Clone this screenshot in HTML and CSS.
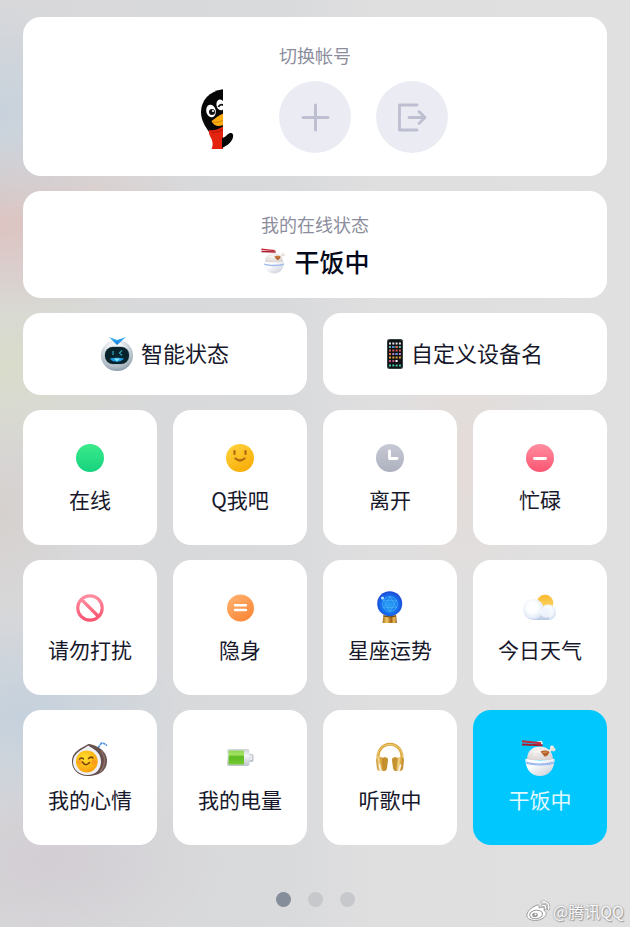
FILE: index.html
```html
<!DOCTYPE html>
<html lang="zh-CN">

<head>
    <meta charset="UTF-8">
    <meta name="viewport" content="width=device-width, initial-scale=1.0">
    <title>我的在线状态</title>
    <link rel="stylesheet" href="styles.css">
</head>

<body>
    <!-- rice bowl is used twice, so it lives here as a symbol -->
    <svg class="defs" width="0" height="0" aria-hidden="true">
        <defs>
            <linearGradient id="bowlFill" x1="0" y1="0" x2="1" y2="1">
                <stop offset="0.3" stop-color="#ffffff" />
                <stop offset="1" stop-color="#c3c8d2" />
            </linearGradient>
            <radialGradient id="riceFill" cx="0.4" cy="0.3" r="0.8">
                <stop offset="0" stop-color="#fbf9f7" />
                <stop offset="1" stop-color="#d5d0cf" />
            </radialGradient>
        </defs>
        <symbol id="rice" viewBox="0 0 40 40">
            <path d="M7 22C7 13 12 8.500 20 8.500S33 14 33 22z" fill="url(#riceFill)" />
            <path d="M11 16h2M15 12h2M20 11h2M17 16h2M12 19h3M22 20h3M28 20h2M18 20h1" stroke="#e4dfdd" stroke-linecap="round" />
            <path d="M27 15l5-4" stroke="#eee8e2" stroke-width="2.500" stroke-linecap="round" />
            <circle cx="32" cy="9.500" r="2" fill="#f4efea" />
            <circle cx="33.500" cy="11.500" r="2" fill="#e6e0da" />
            <path d="M20.500 13.500c3-1.500 7-1.500 9 .5-1 3-3 5-5 4.500-1-1.500-2-2-4-5z" fill="#b5622c" />
            <path d="M23 14.500l4-.5" stroke="#e09a5e" stroke-linecap="round" />
            <path d="M5.500 20.500c4 2.500 25 2.500 29 0C35 30 29.500 38 20 38S5 30 5.500 20.500z" fill="url(#bowlFill)" />
            <path d="M6 24.500c6 2.500 22 2.500 28 0" fill="none" stroke="#8fb0ec" stroke-width="2" />
            <path d="M6 24.500c6 2.500 22 2.500 28 0" fill="none" stroke="#c4d5f7" stroke-width="1" stroke-dasharray="1 1" />
            <path d="M17 3.500l5-.8 1 3.500-5 .5z" fill="#eceef2" />
            <path d="M2 3.200l19 2" stroke="#c8283a" stroke-width="2" />
            <path d="M2 6.500l20.500.7" stroke="#a81f33" stroke-width="2" />
        </symbol>
    </svg>

    <main class="panel">
        <section class="card account">
            <h2 class="card-title">切换帐号</h2>
            <div class="account-list">
                <button type="button" class="round avatar" aria-label="QQ">
                    <svg viewBox="0 0 72 72" width="72" height="72">
                        <clipPath id="half"><path d="M0 0H41V72H0z" /></clipPath>
                        <g clip-path="url(#half)">
                            <path d="M43 8C28 9 19 19 19 31c0 8 4 14 8 20l18 2V8z" fill="#070707" />
                            <ellipse cx="29" cy="30" rx="4.800" ry="6.300" fill="#fff" transform="rotate(-12 29 30)" />
                            <circle cx="30" cy="31" r="3" fill="#111" />
                            <circle cx="31" cy="30" r="1.100" fill="#fff" />
                            <ellipse cx="38.500" cy="24" rx="4" ry="5.500" fill="#fff" transform="rotate(-12 38 24)" />
                            <path d="M36.500 26c1-3 4-3 6-1" fill="none" stroke="#111" stroke-width="1.800" />
                            <path d="M29.500 40C33 38 36 34 43 32v11c-5 3-11 3-13.500-3z" fill="#fbab0c" />
                            <path d="M31 41c3 1 7 0 11-2" fill="none" stroke="#d98300" />
                            <path d="M27 49c5 1 10-1 15-4v23H29.500c2-5 1-7 0-10-1-3-3-4-2.500-9z" fill="#e3220f" />
                            <path d="M30 51c4 1 8-1 12-3" fill="none" stroke="#b51708" />
                        </g>
                        <path d="M40 57c3 0 5-4 8-5 3-.5 4 2 2.500 6C48 63 44 65 40 67z" fill="#070707" />
                    </svg>
                </button>
                <button type="button" class="round" aria-label="添加帐号">
                    <svg viewBox="0 0 72 72" width="72" height="72" fill="none" stroke="#bdbfd1" stroke-width="3" stroke-linecap="round">
                        <path d="M36.500 24v25M24 36.500h25" />
                    </svg>
                </button>
                <button type="button" class="round" aria-label="退出登录">
                    <svg viewBox="0 0 72 72" width="72" height="72" fill="none" stroke="#bdbfd1" stroke-width="2.800" stroke-linecap="round" stroke-linejoin="round">
                        <path d="M41 24H23.500v25H41M33 36.500h16M43 30.500l6 6-6 6" />
                    </svg>
                </button>
            </div>
        </section>

        <section class="card current">
            <h2 class="card-title">我的在线状态</h2>
            <p class="current-status">
                <svg width="28" height="28" aria-hidden="true"><use href="#rice" /></svg>
                <span>干饭中</span>
            </p>
        </section>

        <div class="wide-row">
            <button type="button" class="card wide">
                <svg viewBox="0 0 32 36" width="32" height="36" aria-hidden="true">
                    <defs>
                        <radialGradient id="botHead" cx="0.450" cy="0.300" r="0.750">
                            <stop offset="0.300" stop-color="#f0f3f5" />
                            <stop offset="0.800" stop-color="#a9b5c0" />
                            <stop offset="1" stop-color="#7e8e9d" />
                        </radialGradient>
                        <linearGradient id="botEar" x1="0" y1="0" x2="0" y2="1">
                            <stop offset="0" stop-color="#35b9f7" />
                            <stop offset="1" stop-color="#1477dd" />
                        </linearGradient>
                    </defs>
                    <ellipse cx="16" cy="19.500" rx="16" ry="15.500" fill="url(#botHead)" />
                    <path d="M8 1l8 3 9-3-9 8z" fill="url(#botEar)" />
                    <rect x="3.500" y="10.500" width="25" height="18" rx="8.500" fill="#8ea5b0" />
                    <rect x="4" y="11" width="24" height="17" rx="8" fill="#08232b" />
                    <path d="M12 15v4M21 14.500l-2.500 2.500 2.500 2.500" fill="none" stroke="#2b9fb3" stroke-width="1.300" />
                    <path d="M9 22.500c4-1 10-1 14 0-2 4-12 4.500-14 0z" fill="#1e9fe4" />
                    <path d="M13 22.500l6 0-3 3z" fill="#8de6ff" />
                </svg>
                <span>智能状态</span>
            </button>
            <button type="button" class="card wide">
                <svg viewBox="0 -3 16 36" width="16" height="36" aria-hidden="true">
                    <rect width="16" height="30" rx="2.500" fill="#33423f" />
                    <rect x="1" y="1" width="14" height="28" rx="2" fill="#101216" />
                    <g fill="none" stroke-width="2" stroke-dasharray="2 1.300">
                        <path d="M2 4.500h12" stroke="#e4e7ea" />
                        <path d="M2 8h12" stroke="#62bba6" />
                        <path d="M2 11.500h12" stroke="#d65b54" />
                        <path d="M2 15h12" stroke="#b68acb" />
                        <path d="M2 18.500h12" stroke="#e09c3e" />
                        <path d="M2 22h8" stroke="#c4548a" />
                        <path d="M2 26.500h12" stroke="#42c7a4" />
                    </g>
                    <path d="M5.300 8h2M8.600 15h2" stroke="#4f8de8" stroke-width="2" />
                    <path d="M8.600 8h2M2 15h2" stroke="#e86f48" stroke-width="2" />
                    <path d="M8.600 22h2" stroke="#fff" stroke-width="2" />
                </svg>
                <span>自定义设备名</span>
            </button>
        </div>

        <div class="grid">
            <button type="button" class="card tile">
                <svg viewBox="0 0 40 40" width="40" height="40" aria-hidden="true">
                    <linearGradient id="green" x1="0" y1="0" x2="0" y2="1">
                        <stop offset="0" stop-color="#3bea8c" />
                        <stop offset="1" stop-color="#17d27e" />
                    </linearGradient>
                    <circle cx="20" cy="20" r="14" fill="url(#green)" />
                </svg>
                <span>在线</span>
            </button>
            <button type="button" class="card tile">
                <svg viewBox="0 0 40 40" width="40" height="40" aria-hidden="true">
                    <linearGradient id="yellow" x1="0" y1="0" x2="0.600" y2="1">
                        <stop offset="0" stop-color="#ffd53f" />
                        <stop offset="1" stop-color="#f8ae0a" />
                    </linearGradient>
                    <circle cx="20" cy="20" r="14" fill="url(#yellow)" />
                    <path d="M14.500 13v3M25.500 13v3M15.500 20.500q4.500 4 9 0" fill="none" stroke="#b3670f" stroke-width="2.200" stroke-linecap="round" />
                </svg>
                <span>Q我吧</span>
            </button>
            <button type="button" class="card tile">
                <svg viewBox="0 0 40 40" width="40" height="40" aria-hidden="true">
                    <linearGradient id="grey" x1="0" y1="0" x2="0" y2="1">
                        <stop offset="0" stop-color="#c7cad5" />
                        <stop offset="1" stop-color="#adb0be" />
                    </linearGradient>
                    <circle cx="20" cy="20" r="14" fill="url(#grey)" />
                    <path d="M19.500 13v7.500h7.500" fill="none" stroke="#fff" stroke-width="2.800" stroke-linecap="round" stroke-linejoin="round" />
                </svg>
                <span>离开</span>
            </button>
            <button type="button" class="card tile">
                <svg viewBox="0 0 40 40" width="40" height="40" aria-hidden="true">
                    <linearGradient id="pink" x1="0" y1="0" x2="0" y2="1">
                        <stop offset="0" stop-color="#ff8d9f" />
                        <stop offset="1" stop-color="#fb5572" />
                    </linearGradient>
                    <circle cx="20" cy="20" r="14" fill="url(#pink)" />
                    <path d="M14.500 20.500h11" stroke="#fff" stroke-width="2.800" stroke-linecap="round" />
                </svg>
                <span>忙碌</span>
            </button>

            <button type="button" class="card tile">
                <svg viewBox="0 0 40 40" width="40" height="40" aria-hidden="true">
                    <g fill="none" stroke="url(#pink)" stroke-width="3.200">
                        <circle cx="20" cy="20" r="12.200" />
                        <path d="M11.500 11.500l17 17" />
                    </g>
                </svg>
                <span>请勿打扰</span>
            </button>
            <button type="button" class="card tile">
                <svg viewBox="0 0 40 40" width="40" height="40" aria-hidden="true">
                    <linearGradient id="orange" x1="0" y1="0" x2="0.700" y2="1">
                        <stop offset="0" stop-color="#ffb574" />
                        <stop offset="1" stop-color="#fa8737" />
                    </linearGradient>
                    <circle cx="20.500" cy="20" r="13.500" fill="url(#orange)" />
                    <path d="M15 17.300h11M15 22h11" stroke="#fff" stroke-width="2.400" stroke-linecap="round" />
                </svg>
                <span>隐身</span>
            </button>
            <button type="button" class="card tile">
                <svg viewBox="0 0 40 40" width="40" height="40" aria-hidden="true">
                    <defs>
                        <radialGradient id="ball" cx="0.500" cy="0.550" r="0.520">
                            <stop offset="0" stop-color="#2ba4f5" />
                            <stop offset="0.650" stop-color="#1473ee" />
                            <stop offset="1" stop-color="#1c4bd8" />
                        </radialGradient>
                        <linearGradient id="gold" x1="0" y1="0" x2="1" y2="0">
                            <stop offset="0" stop-color="#a8701b" />
                            <stop offset="0.300" stop-color="#f1c964" />
                            <stop offset="0.600" stop-color="#9c6013" />
                            <stop offset="0.800" stop-color="#edc05c" />
                            <stop offset="1" stop-color="#8d5715" />
                        </linearGradient>
                    </defs>
                    <path d="M13.500 26.500h12.500l1 8.500h-14.500z" fill="url(#gold)" />
                    <path d="M13.500 28q6 2 12.500 0" fill="none" stroke="#70430f" />
                    <circle cx="19.700" cy="15.700" r="12.500" fill="url(#ball)" />
                    <g fill="none" stroke="#5cc3f8" stroke-width="0.500">
                        <circle cx="20" cy="16" r="7.500" />
                        <path d="M20 8.500l6.500 11.200h-13zM20 23.500l-6.500-11.200h13z" />
                    </g>
                    <circle cx="12.500" cy="10" r="1.500" fill="#b7e7ff" />
                </svg>
                <span>星座运势</span>
            </button>
            <button type="button" class="card tile">
                <svg viewBox="0 0 40 40" width="40" height="40" aria-hidden="true">
                    <defs>
                        <linearGradient id="sun" x1="0" y1="0" x2="0" y2="1">
                            <stop offset="0" stop-color="#f9b92e" />
                            <stop offset="1" stop-color="#fddc78" />
                        </linearGradient>
                        <linearGradient id="cloudBase" x1="0" y1="0" x2="0" y2="1">
                            <stop offset="0" stop-color="#f1f5fb" />
                            <stop offset="1" stop-color="#b9c9e4" />
                        </linearGradient>
                        <radialGradient id="cloud" cx="0.450" cy="0.400" r="0.620">
                            <stop offset="0.400" stop-color="#fdfeff" />
                            <stop offset="0.800" stop-color="#e6edf8" />
                            <stop offset="1" stop-color="#bfcee7" />
                        </radialGradient>
                    </defs>
                    <circle cx="25" cy="15" r="8.300" fill="url(#sun)" />
                    <circle cx="28.300" cy="24.300" r="7.700" fill="url(#cloud)" />
                    <path d="M12 20H29V32H12z" fill="url(#cloudBase)" />
                    <circle cx="13.500" cy="21.500" r="10.500" fill="url(#cloud)" />
                    <ellipse cx="26" cy="24" rx="6" ry="5.500" fill="#f4f7fc" opacity="0.800" />
                </svg>
                <span>今日天气</span>
            </button>

            <button type="button" class="card tile">
                <svg viewBox="0 0 40 40" width="40" height="40" aria-hidden="true">
                    <defs>
                        <radialGradient id="yolk" cx="0.400" cy="0.350" r="0.700">
                            <stop offset="0" stop-color="#ffe02c" />
                            <stop offset="1" stop-color="#fb9d0b" />
                        </radialGradient>
                    </defs>
                    <path d="M28 10l3.500-5 2.500.5 3 2" fill="none" stroke="#4d92de" stroke-width="1.600" stroke-dasharray="3 0.600" />
                    <path d="M18 6c5 0 19 5 19 17 0 10-8 15-19 15z" fill="#69514e" />
                    <path d="M31 13c5 6 5 14-1 21" fill="none" stroke="#8b706c" stroke-width="1.500" />
                    <path d="M18.300 6C22 9 32 12 32 23c0 9-6 15-14.500 15S2 32 2 24C2 13 12 10 18.300 6z" fill="#65504c" />
                    <path d="M18.300 7.500C22 10.500 31 13.500 31 23.300c0 8.300-5.300 13.700-13.500 13.700S3 31.500 3 24C3 14.500 12.800 11.500 18.300 7.500z" fill="#eef2f8" />
                    <circle cx="16.800" cy="23.500" r="11" fill="url(#yolk)" />
                    <circle cx="9.500" cy="24" r="2.500" fill="#fb8c22" opacity="0.600" />
                    <circle cx="24" cy="24" r="2.500" fill="#fb8c22" opacity="0.600" />
                    <path d="M9.500 21q2.500-2 4 0M18.500 20.500q2.500-2.500 4.500-.5M12.500 24q3 5 7 .5" fill="none" stroke="#76400b" stroke-width="1.500" stroke-linecap="round" />
                </svg>
                <span>我的心情</span>
            </button>
            <button type="button" class="card tile">
                <svg viewBox="0 0 40 40" width="40" height="40" aria-hidden="true">
                    <defs>
                        <linearGradient id="charge" x1="0" y1="0" x2="0" y2="1">
                            <stop offset="0" stop-color="#8fd755" />
                            <stop offset="0.300" stop-color="#a0e15f" />
                            <stop offset="0.450" stop-color="#5dbb20" />
                            <stop offset="1" stop-color="#74c934" />
                        </linearGradient>
                        <linearGradient id="shell" x1="0" y1="0" x2="0" y2="1">
                            <stop offset="0" stop-color="#cdd2d9" />
                            <stop offset="0.400" stop-color="#f3f5f8" />
                            <stop offset="1" stop-color="#bcc2cc" />
                        </linearGradient>
                    </defs>
                    <rect x="27" y="16" width="6.500" height="8" rx="1.500" fill="#c1c7cf" />
                    <rect x="29.500" y="17" width="2.500" height="5" fill="#e8ebef" />
                    <rect x="7" y="11" width="22.500" height="17" rx="2" fill="url(#shell)" />
                    <rect x="8.500" y="12.500" width="15.500" height="14" rx="1" fill="url(#charge)" />
                </svg>
                <span>我的电量</span>
            </button>
            <button type="button" class="card tile">
                <svg viewBox="0 0 40 40" width="40" height="40" aria-hidden="true">
                    <defs>
                        <linearGradient id="cup" x1="0" y1="0" x2="1" y2="0">
                            <stop offset="0" stop-color="#c08c2c" />
                            <stop offset="0.350" stop-color="#f5d98c" />
                            <stop offset="0.600" stop-color="#dda93f" />
                            <stop offset="1" stop-color="#b98328" />
                        </linearGradient>
                    </defs>
                    <path d="M8.200 23C5 .5 35 .5 31.800 23" fill="none" stroke="#d9a63c" stroke-width="3" />
                    <path d="M7.700 20C6.500 2 33.500 2 32.300 20" fill="none" stroke="#f0cf7b" stroke-width="1" />
                    <rect x="11.500" y="19" width="6" height="14" rx="3" fill="#c5922f" transform="rotate(8 14 26)" />
                    <rect x="6.500" y="19" width="7.500" height="14" rx="3.700" fill="url(#cup)" transform="rotate(-6 10 26)" />
                    <path d="M9.500 27l1.500 5.500" stroke="#f4efe2" stroke-width="1.800" stroke-linecap="round" />
                    <rect x="22.500" y="19" width="6" height="14" rx="3" fill="#c5922f" transform="rotate(-8 26 26)" />
                    <rect x="26" y="19" width="7.500" height="14" rx="3.700" fill="url(#cup)" transform="rotate(6 30 26)" />
                    <path d="M30.500 27l-1.500 5.500" stroke="#f4efe2" stroke-width="1.800" stroke-linecap="round" />
                </svg>
                <span>听歌中</span>
            </button>
            <button type="button" class="card tile active" aria-pressed="true">
                <svg width="40" height="40" aria-hidden="true"><use href="#rice" /></svg>
                <span>干饭中</span>
            </button>
        </div>

        <nav class="dots" aria-label="分页">
            <button type="button" class="dot on" aria-label="1"></button>
            <button type="button" class="dot" aria-label="2"></button>
            <button type="button" class="dot" aria-label="3"></button>
        </nav>
    </main>

    <div class="watermark">
        <svg viewBox="0 0 26 22" width="26" height="22" aria-hidden="true">
            <path d="M10 6c3-2 5-1 4 2 4-1.500 6-.5 5 2.500 6 3-1 10-8.500 10C4 20.500 1 17 2 14c1-3 4-6.500 8-8z" fill="#fff" stroke="#999a9c" />
            <ellipse cx="11" cy="14.500" rx="6.500" ry="4.300" fill="none" stroke="#999a9c" transform="rotate(-8 11 14)" />
            <ellipse cx="10" cy="15" rx="2.800" ry="2.200" fill="#999a9c" />
            <circle cx="10.500" cy="14.500" r="1" fill="#fff" />
            <path d="M17 2c5-1 8 3 6.500 7M17.500 5.500c2.500-.5 3.800 1 3 3" fill="none" stroke="#999a9c" stroke-width="2.800" stroke-linecap="round" />
            <path d="M17 2c5-1 8 3 6.500 7M17.500 5.500c2.500-.5 3.800 1 3 3" fill="none" stroke="#fff" stroke-width="1.400" stroke-linecap="round" />
        </svg>
        <span>@腾讯QQ</span>
    </div>
</body>

</html>
```

FILE: styles.css
```css
* {
    box-sizing: border-box;
}

body {
    margin: 0;
    min-height: 100vh;
    font-family: "Noto Sans CJK SC", sans-serif;
    color: #17182b;
    background:
        radial-gradient(ellipse 130px 110px at 0 110px, rgba(184, 204, 222, 0.5), transparent),
        radial-gradient(ellipse 220px 90px at 0 225px, rgba(224, 176, 168, 0.5), transparent),
        radial-gradient(ellipse 170px 100px at 0 365px, rgba(218, 222, 192, 0.6), transparent),
        radial-gradient(ellipse 90px 110px at 0 510px, rgba(212, 204, 198, 0.6), transparent),
        radial-gradient(ellipse 170px 110px at 20px 715px, rgba(184, 204, 222, 0.6), transparent),
        radial-gradient(ellipse 170px 100px at 50px 860px, rgba(206, 198, 206, 0.6), transparent),
        radial-gradient(ellipse 90px 150px at 465px 460px, rgba(230, 218, 212, 0.7), transparent),
        linear-gradient(90deg, #d8d8da, #d9dadc 45%, #dfdfe0 60%, #e0e0e1);
}

.defs {
    position: absolute;
}

.panel {
    display: flex;
    flex-direction: column;
    gap: 15px;
    padding: 17px 23px;
}

button {
    margin: 0;
    padding: 0;
    border: none;
    font-family: inherit;
    color: inherit;
    cursor: pointer;
}

svg {
    display: block;
    flex-shrink: 0;
}

.card {
    background: #fff;
    border-radius: 18px;
    text-align: center;
}

.card-title {
    margin: 0;
    font-size: 18px;
    line-height: 26px;
    font-weight: 400;
    color: #8c8e9d;
}

/* accounts */
.account {
    padding: 25px 20px 23px;
}

.account-list {
    display: flex;
    justify-content: center;
    gap: 25px;
    margin-top: 13px;
}

.round {
    width: 72px;
    height: 72px;
    border-radius: 50%;
    background: #ebebf4;
}

.avatar {
    background: #fff;
}

/* current status */
.current {
    padding: 20px 20px 19px;
}

.current-status {
    display: flex;
    justify-content: center;
    align-items: center;
    gap: 6px;
    margin: 6px 0 0;
    font-size: 25px;
    line-height: 36px;
    font-weight: 500;
    color: #03081a;
}

/* two wide buttons */
.wide-row {
    display: grid;
    grid-template-columns: 1fr 1fr;
    gap: 16px;
}

.wide {
    display: flex;
    justify-content: center;
    align-items: flex-start;
    gap: 8px;
    padding: 23px 10px;
    font-size: 22px;
    line-height: 32px;
}

/* status tiles */
.grid {
    display: grid;
    grid-template-columns: repeat(4, 1fr);
    gap: 15px 16px;
}

.tile {
    display: flex;
    flex-direction: column;
    align-items: center;
    gap: 7px;
    padding: 28px 0 32px;
    font-size: 21px;
    line-height: 28px;
}

.tile.active {
    background: #00c8ff;
    color: #e0f8ff;
}

/* page dots */
.dots {
    display: flex;
    justify-content: center;
    gap: 17px;
    padding-top: 32px;
}

.dot {
    width: 15px;
    height: 15px;
    border-radius: 50%;
    background: #c6c8cc;
}

.dot.on {
    background: #858c9a;
}

.watermark {
    position: absolute;
    right: 6px;
    bottom: 4px;
    display: flex;
    align-items: center;
    gap: 2px;
    font-size: 16px;
    line-height: 24px;
    color: #f8f8f8;
    text-shadow: 0 0 2px #8a8a8c, 1px 1px 1px #a0a0a2;
}
```
